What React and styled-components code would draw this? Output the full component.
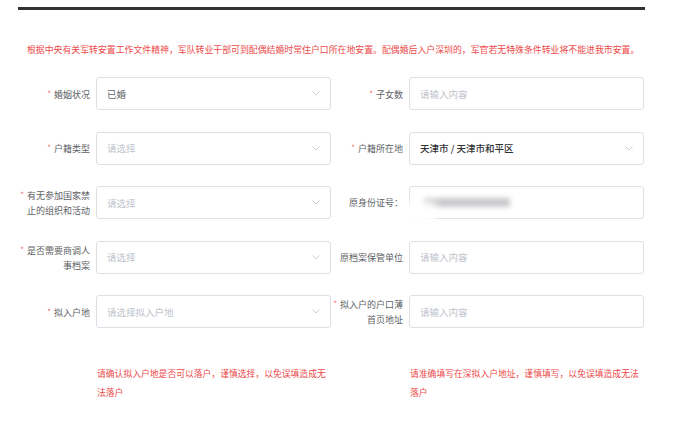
import React from 'react';
import styled, { createGlobalStyle } from 'styled-components';

const GlobalStyle = createGlobalStyle`
  html, body {
    margin: 0;
    padding: 0;
    background: #fff;
  }
  body {
    font-family: "Noto Sans CJK SC", "Noto Sans", sans-serif;
  }
`;

const fields = [
  { label: '婚姻状况', required: true, kind: 'select', value: '已婚' },
  { label: '子女数', required: true, kind: 'input', placeholder: '请输入内容' },
  { label: '户籍类型', required: true, kind: 'select', placeholder: '请选择' },
  { label: '户籍所在地', required: true, kind: 'select', value: '天津市 / 天津市和平区', strong: true },
  { label: '有无参加国家禁止的组织和活动', required: true, kind: 'select', placeholder: '请选择' },
  { label: '原身份证号：', kind: 'input', masked: true },
  { label: '是否需要商调人事档案', required: true, kind: 'select', placeholder: '请选择' },
  { label: '原档案保管单位', kind: 'input', placeholder: '请输入内容' },
  { label: '拟入户地', required: true, kind: 'select', placeholder: '请选择拟入户地' },
  { label: '拟入户的户口薄首页地址', required: true, kind: 'input', placeholder: '请输入内容' },
];

const Chevron = () => (
  <svg width="8" height="5" viewBox="0 0 8 5">
    <polyline points="0.5,0.5 4,4 7.5,0.5" fill="none" stroke="#c8cbd2" strokeWidth="0.9" />
  </svg>
);

const Field = ({ field }) => (
  <FieldRow>
    <Label>
      {field.required && <Star>*</Star>}
      {field.label}
    </Label>
    <Box>
      {field.masked ? (
        <Masked />
      ) : (
        <Value $placeholder={!field.value} $strong={field.strong}>
          {field.value || field.placeholder}
        </Value>
      )}
      {field.kind === 'select' && <Chevron />}
    </Box>
  </FieldRow>
);

const App = () => (
  <Page>
    <GlobalStyle />
    <TopRule />
    <Notice>
      根据中央有关军转安置工作文件精神，军队转业干部可到配偶结婚时常住户口所在地安置。配偶婚后入户深圳的，军官若无特殊条件转业将不能进我市安置。
    </Notice>
    <Grid>
      {fields.map((f) => (
        <Field key={f.label} field={f} />
      ))}
    </Grid>
    <Notes>
      <Note>请确认拟入户地是否可以落户，谨慎选择，以免误填造成无法落户</Note>
      <Note>请准确填写在深拟入户地址，谨慎填写，以免误填造成无法落户</Note>
    </Notes>
  </Page>
);

export default App;

const Page = styled.div`
  width: 693px;
  height: 447px;
  padding: 7px 0 0 18px;
  box-sizing: border-box;
  overflow: hidden;
`;

const TopRule = styled.div`
  width: 627px;
  height: 3px;
  background: #333;
`;

const Notice = styled.div`
  margin: 34px 0 0 9px;
  font-size: 8.9px;
  line-height: 12px;
  color: #ec4a4a;
  white-space: nowrap;
`;

const Grid = styled.div`
  margin-top: 21px;
  display: grid;
  grid-template-columns: 313px 313px;
  row-gap: 21.5px;
`;

const FieldRow = styled.div`
  display: flex;
  align-items: center;
`;

const Label = styled.div`
  width: 72px;
  margin-right: 6px;
  text-align: right;
  font-size: 9px;
  line-height: 15px;
  color: #606266;
`;

const Star = styled.span`
  color: #f56c6c;
  font-size: 8px;
  margin-right: 3px;
  vertical-align: 1px;
`;

const Box = styled.div`
  width: 235px;
  height: 33px;
  box-sizing: border-box;
  border: 1px solid #dcdfe6;
  border-radius: 3px;
  display: flex;
  align-items: center;
  justify-content: space-between;
  padding: 0 10px;
  position: relative;
`;

const Value = styled.span`
  font-size: 9.5px;
  color: ${(p) => (p.$placeholder ? '#c0c4cc' : p.$strong ? '#303133' : '#606266')};
  font-weight: ${(p) => (p.$strong ? 500 : 400)};
`;

const Masked = styled.span`
  display: block;
  width: 86px;
  height: 9px;
  margin-left: 4px;
  background: #c9c9cc;
  filter: blur(2.5px);
  &::before {
    content: '';
    position: absolute;
    left: -22px;
    top: 4px;
    width: 34px;
    height: 22px;
    background: #fff;
    filter: blur(3px);
  }
`;

const Notes = styled.div`
  margin-top: 36px;
  display: grid;
  grid-template-columns: 235px 235px;
  column-gap: 78px;
  padding-left: 79px;
`;

const Note = styled.div`
  font-size: 8.8px;
  line-height: 19px;
  color: #ec4a4a;
`;
